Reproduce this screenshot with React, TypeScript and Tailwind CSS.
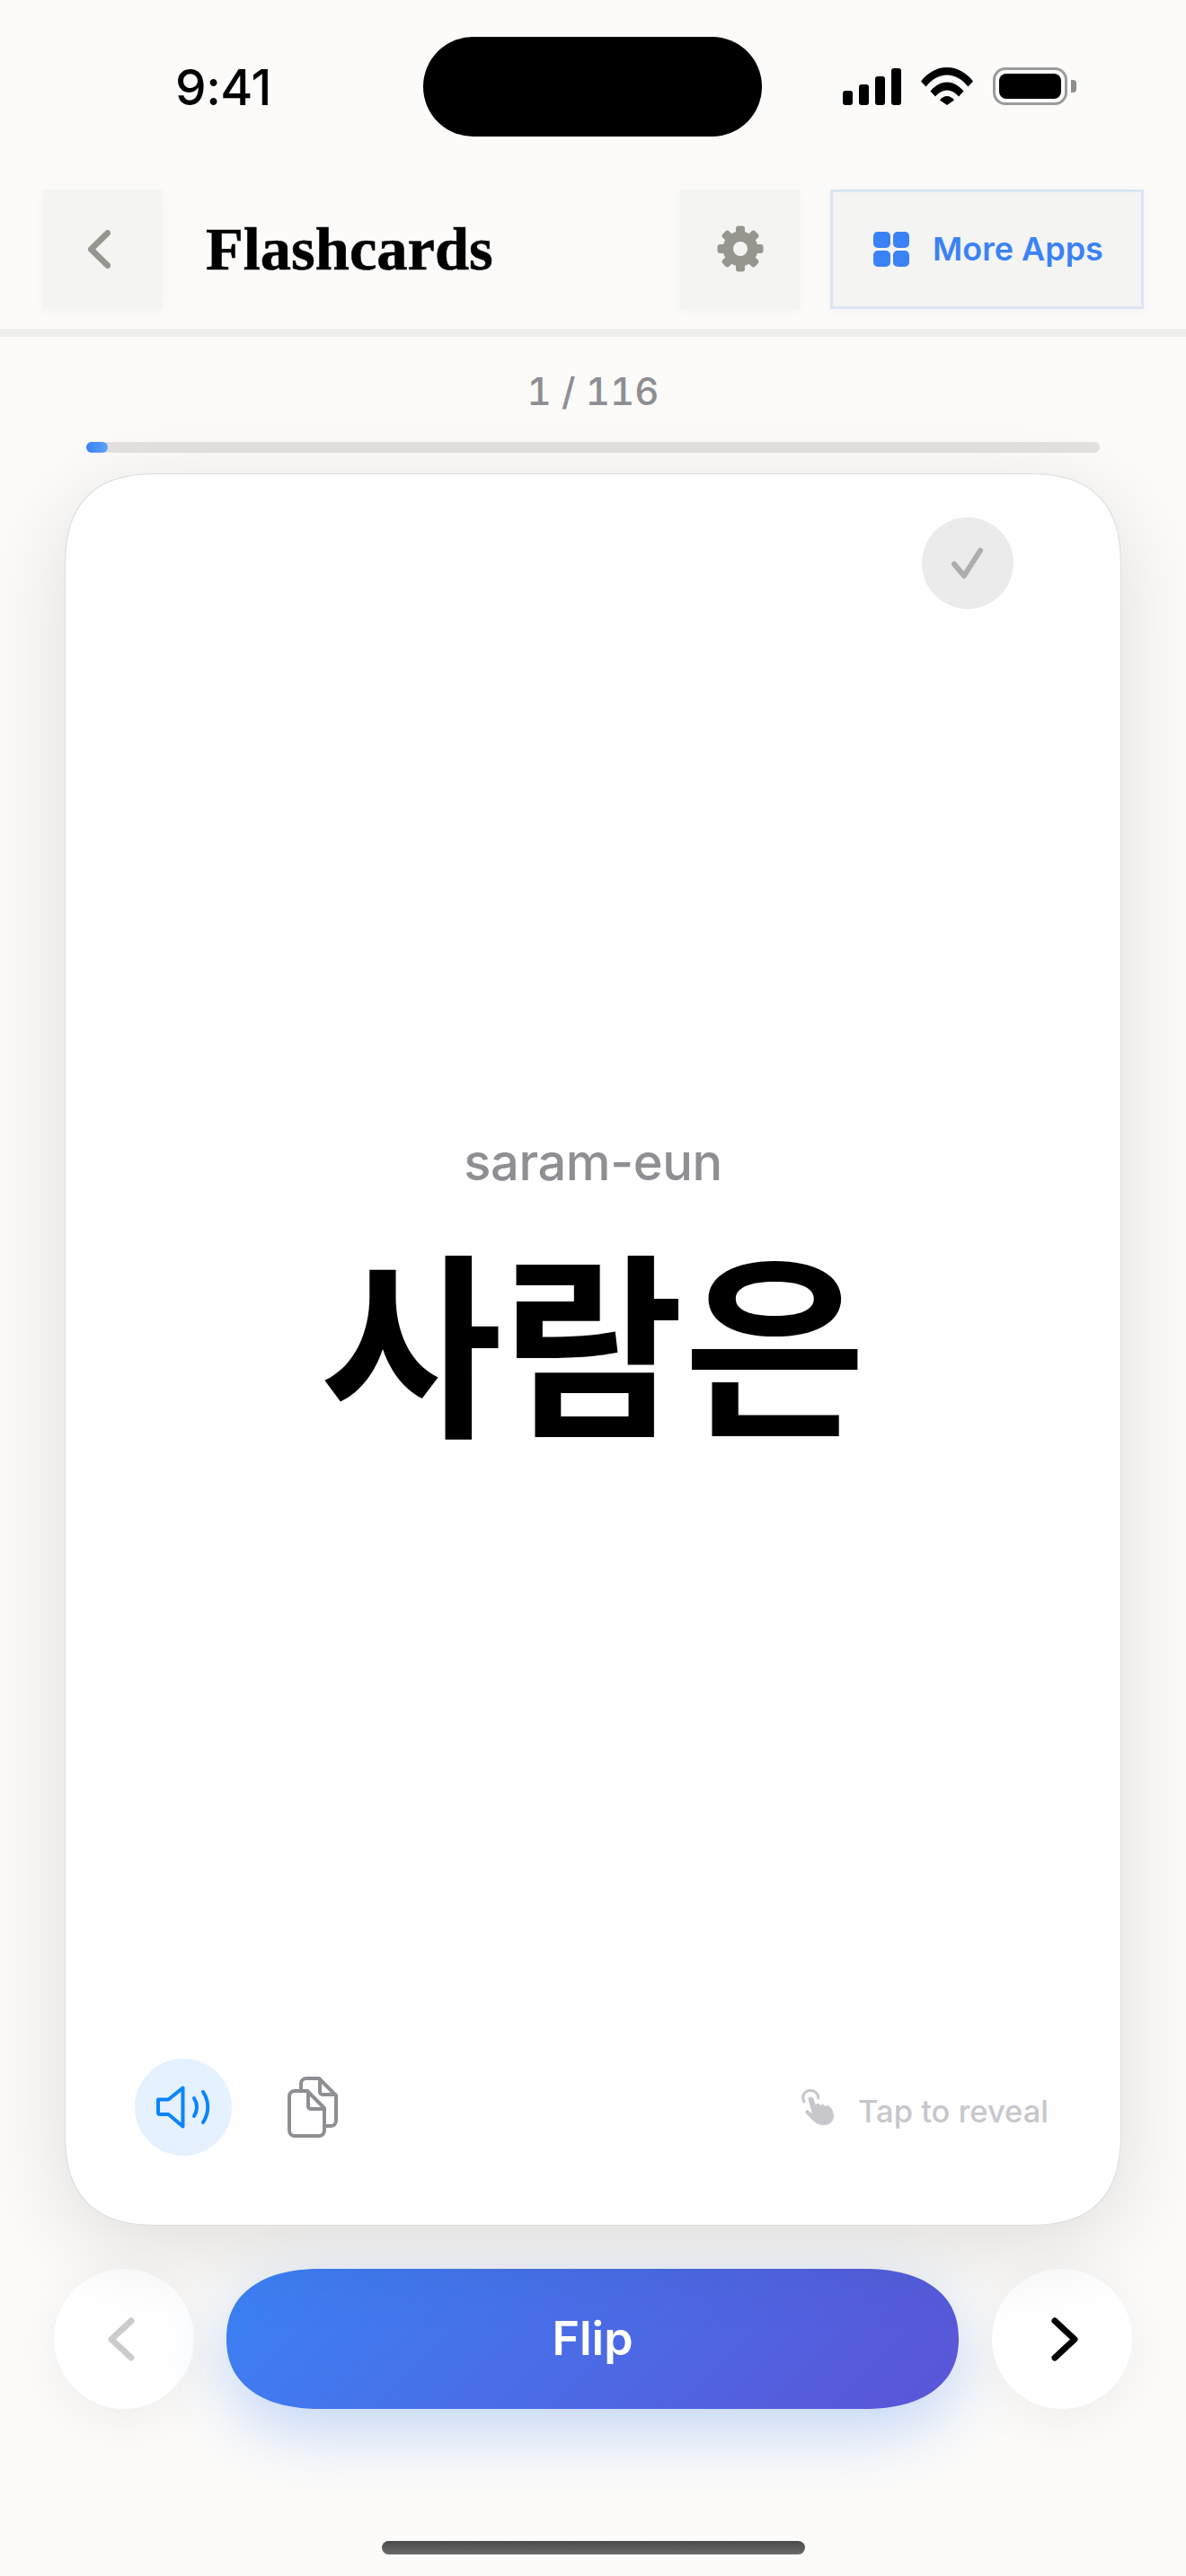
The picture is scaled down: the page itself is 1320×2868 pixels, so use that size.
import React from "react";

const inter = "font-['Inter','Noto_Sans',sans-serif]";

function Signal() {
  return (
    <svg width="65" height="41" viewBox="0 0 65 41" fill="black">
      <rect x="0" y="25" width="11" height="16" rx="3" />
      <rect x="18" y="18" width="11" height="23" rx="3" />
      <rect x="36" y="9" width="11" height="32" rx="3" />
      <rect x="54" y="0" width="11" height="41" rx="3" />
    </svg>
  );
}

function Wifi() {
  return (
    <svg width="58" height="42" viewBox="0 0 58 42" fill="black">
      <path d="M0 15.500C7.500 6 17.500 0 29 0s21.500 6 29 15.500L52.500 21.500C46 13.500 38 8.500 29 8.500S12 13.500 5.500 21.500Z" />
      <path d="M10.500 26.500C15.500 20.500 22 16.500 29 16.500s13.500 4 18.500 10L42 32.500C38.500 28.500 34 25.500 29 25.500s-9.500 3-13 7Z" />
      <path d="M21 36.500L29 42L37 36.500C35 33.500 32 32 29 32S23 33.500 21 36.500Z" />
    </svg>
  );
}

function Battery() {
  return (
    <div className="flex items-center">
      <div className="w-[83px] h-[42px] rounded-[14px] border-[3px] border-[#9b9b9b] p-[4px] box-border">
        <div className="w-full h-full rounded-[8px] bg-black" />
      </div>
      <div className="w-[6px] h-[14px] rounded-r-[4px] bg-[#8e8e8e] ml-[4px]" />
    </div>
  );
}

function Chevron({ color, dir, w = 25, h = 43, sw = 7 }: { color: string; dir: "l" | "r"; w?: number; h?: number; sw?: number }) {
  return (
    <svg width={w} height={h} viewBox="0 0 30 50" preserveAspectRatio="none" fill="none" stroke={color} strokeWidth={sw} strokeLinecap="round" strokeLinejoin="round">
      {dir === "l" ? <path d="M26 4L4 25l22 21" /> : <path d="M4 4l22 21L4 46" />}
    </svg>
  );
}

function Gear() {
  const angles = [0, 45, 90, 135, 180, 225, 270, 315];
  return (
    <svg width="52" height="52" viewBox="0 0 52 52" fill="#96968f">
      <circle cx="26" cy="26" r="19.500" />
      {angles.map((a) => (
        <rect key={a} x="21" y="0.500" width="10" height="12" rx="3" transform={`rotate(${a} 26 26)`} />
      ))}
      <circle cx="26" cy="26" r="8" fill="#f4f4f2" />
    </svg>
  );
}

function Apps() {
  return (
    <div className="grid grid-cols-2 gap-[3px] w-[40px] h-[39px]">
      <div className="bg-[#3b82f6] rounded-[5px]" />
      <div className="bg-[#3b82f6] rounded-[5px]" />
      <div className="bg-[#3b82f6] rounded-[5px]" />
      <div className="bg-[#3b82f6] rounded-[5px]" />
    </div>
  );
}

function Speaker() {
  return (
    <svg width="60" height="48" viewBox="0 0 60 48" fill="none" stroke="#0a84ff" strokeWidth="4" strokeLinecap="round" strokeLinejoin="round">
      <path d="M2 15.500h11.500L29.500 2.500v43L13.500 32H4a2 2 0 0 1-2-2Z" />
      <path d="M42 14c4 6.500 4 13.500 0 20" />
      <path d="M52 7c7 10.500 7 23.500 0 34" />
    </svg>
  );
}

function Docs() {
  return (
    <svg width="56" height="68" viewBox="0 0 56 68" fill="none" stroke="#8e8e93" strokeWidth="4" strokeLinecap="round" strokeLinejoin="round">
      <path d="M15 16V8a6 6 0 0 1 6-6h14l19 19v28a6 6 0 0 1-6 6h-6" />
      <path d="M36 3v14a3 3 0 0 0 3 3h14" />
      <path d="M2 22a6 6 0 0 1 6-6h14l19 19v25a6 6 0 0 1-6 6H8a6 6 0 0 1-6-6Z" />
      <path d="M23 17v16a3 3 0 0 0 3 3h14" />
    </svg>
  );
}

function Hand() {
  return (
    <svg width="36" height="40" viewBox="0 0 36 40" fill="none">
      <path d="M3 14C-0.500 7 4 1.500 10 1.500c5 0 9 3.500 8.500 8.500" stroke="#c7c7cc" strokeWidth="3" strokeLinecap="round" />
      <path d="M7.500 11C7.500 7.500 13 7.500 13.500 11L15.500 17 19 15.500 21 18 24 16.500 26 19 29 18C34 20 36 26 36 30 36 36 31 40 25 40 20 40 16 38 13 35L5 27C3 25 6 22 8 24L12 27.500Z" fill="#c7c7cc" />
    </svg>
  );
}

export default function App() {
  return (
    <div className={`relative w-[1320px] h-[2868px] overflow-hidden bg-[#fcfbf9] flex flex-col ${inter}`}>
      <div className="absolute left-[471px] top-[41px] w-[377px] h-[111px] rounded-[56px] bg-black" />

      {/* Status bar */}
      <div className="h-[210px] shrink-0 flex items-start justify-between pl-[195px] pr-[122px] pt-[75px]">
        <span className="text-[55px] leading-[44px] font-[550] text-black tracking-[-0.5px]">9:41</span>
        <div className="flex items-center gap-[22px]">
          <Signal />
          <Wifi />
          <Battery />
        </div>
      </div>

      {/* Header */}
      <div className="h-[165px] shrink-0 border-b-[9px] border-[#eeeeeb] pl-[48px] pr-[47px] pb-[22px] box-border flex items-center">
        <div className="w-[133px] h-[133px] bg-[#f4f4f2] shadow-[0_3px_14px_rgba(0,0,0,0.035)] flex items-center justify-center pr-[9px]">
          <Chevron color="#96968f" dir="l" sw={8} />
        </div>
        <h1 className="ml-[48px] text-[68.500px] leading-[72px] font-bold text-black font-['Liberation_Serif',serif] [-webkit-text-stroke:0.6px_black]">Flashcards</h1>
        <div className="ml-auto w-[133px] h-[133px] bg-[#f4f4f2] shadow-[0_3px_14px_rgba(0,0,0,0.035)] flex items-center justify-center">
          <Gear />
        </div>
        <div className="ml-[34px] w-[349px] h-[133px] bg-[#f4f4f2] border-[3px] border-[#dbe5f4] shadow-[0_3px_14px_rgba(0,0,0,0.04)] box-border flex items-center gap-[26px] pl-[45px]">
          <Apps />
          <span className="text-[36px] leading-[44px] font-semibold text-[#3b82f6]">More Apps</span>
        </div>
      </div>

      {/* Progress */}
      <div className="shrink-0 pt-[35px] flex flex-col items-center">
        <span className="text-[42px] leading-[52px] font-medium tabular-nums text-[#8e8e93]">1 / 116</span>
        <div className="mt-[30px] w-[1128px] h-[12px] rounded-full bg-[#e3e2e0]">
          <div className="w-[24px] h-full rounded-full bg-[linear-gradient(90deg,#3b82f6,#60a5fa)]" />
        </div>
      </div>

      {/* Card */}
      <div className="relative mx-[72px] mt-[23px] h-[1951px] shrink-0 rounded-[108px] [corner-shape:superellipse(1.4)] bg-white border border-[#dcdcda] box-border shadow-[0_24px_100px_rgba(0,0,0,0.12)] flex flex-col items-center">
        <div className="absolute right-[119px] top-[48px] w-[102px] h-[102px] rounded-full bg-[#ebebeb] flex items-center justify-center">
          <svg width="42" height="42" viewBox="0 0 42 42" fill="none" stroke="#adadad" strokeWidth="6" strokeLinecap="round" strokeLinejoin="round">
            <path d="M6 22l11 13L35 7" />
          </svg>
        </div>

        <div className="mt-[732px] text-[56px] leading-[68px] font-medium tracking-[-0.4px] text-[#8e8e93]">saram-eun</div>
        <div className="mt-[24px] text-[220px] leading-[270px] font-bold text-black font-['Noto_Sans_CJK_KR',sans-serif]">사람은</div>

        <div className="absolute left-[77px] right-[80px] bottom-[77px] flex items-center">
          <div className="w-[108px] h-[108px] rounded-full bg-[#e5f1fe] flex items-center justify-center">
            <Speaker />
          </div>
          <div className="ml-[62px]">
            <Docs />
          </div>
          <div className="ml-auto flex items-center gap-[27px] text-[34.500px] leading-[44px] font-medium text-[#c7c7cc]">
            <Hand />
            <span className="pt-[10px]">Tap to reveal</span>
          </div>
        </div>
      </div>

      {/* Controls */}
      <div className="shrink-0 mt-[48px] pl-[60px] pr-[60px] flex items-center">
        <div className="w-[156px] h-[156px] rounded-full bg-white shadow-[0_12px_60px_rgba(0,0,0,0.06)] flex items-center justify-center pr-[6px]">
          <Chevron color="#cccccc" dir="l" w={30} h={49} />
        </div>
        <div className="ml-[36px] w-[815px] h-[156px] rounded-[106px/78px] [corner-shape:superellipse(1.2)] bg-[linear-gradient(135deg,#3b82f6,#5b54d6)] shadow-[0_24px_72px_rgba(59,130,246,0.3)] flex items-center justify-center text-white text-[52px] leading-[60px] font-semibold">
          Flip
        </div>
        <div className="ml-[37px] w-[156px] h-[156px] rounded-full bg-white shadow-[0_12px_60px_rgba(0,0,0,0.06)] flex items-center justify-center pl-[6px]">
          <Chevron color="#000000" dir="r" w={30} h={49} />
        </div>
      </div>

      {/* Home indicator */}
      <div className="mt-[147px] mx-auto w-[471px] h-[15px] shrink-0 rounded-full bg-[linear-gradient(180deg,#4a4a4a,#6a6a6a)]" />
    </div>
  );
}
